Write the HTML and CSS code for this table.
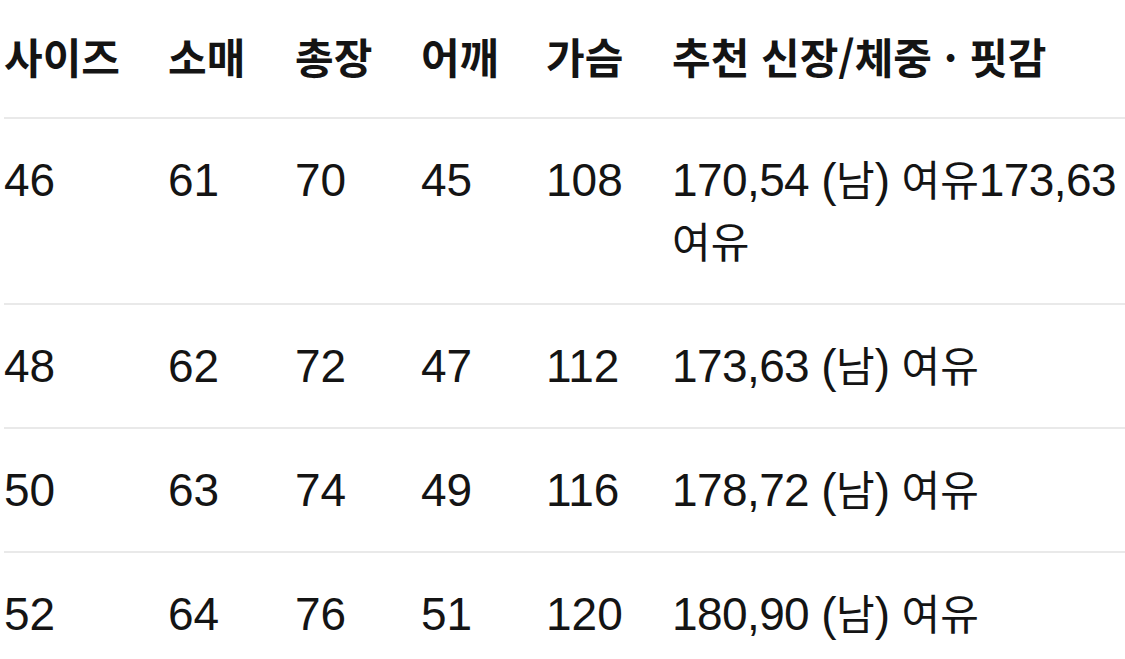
FILE: index.html
```html
<!DOCTYPE html>
<html lang="ko">
<head>
<meta charset="utf-8">
<title>사이즈표</title>
<link rel="stylesheet" href="styles.css">
</head>
<body>
<table class="size-table">
  <colgroup>
    <col class="c-size">
    <col class="c-sleeve">
    <col class="c-length">
    <col class="c-shoulder">
    <col class="c-chest">
    <col class="c-rec">
  </colgroup>
  <thead>
    <tr>
      <th>사이즈</th>
      <th>소매</th>
      <th>총장</th>
      <th>어깨</th>
      <th>가슴</th>
      <th>추천 신장/체중 · 핏감</th>
    </tr>
  </thead>
  <tbody>
    <tr>
      <td>46</td><td>61</td><td>70</td><td>45</td><td>108</td>
      <td class="rec">170,54 (<span class="ko">남</span>) <span class="ko">여유</span>173,63 <span class="ko">여유</span></td>
    </tr>
    <tr>
      <td>48</td><td>62</td><td>72</td><td>47</td><td>112</td>
      <td class="rec">173,63 (<span class="ko">남</span>) <span class="ko">여유</span></td>
    </tr>
    <tr>
      <td>50</td><td>63</td><td>74</td><td>49</td><td>116</td>
      <td class="rec">178,72 (<span class="ko">남</span>) <span class="ko">여유</span></td>
    </tr>
    <tr>
      <td>52</td><td>64</td><td>76</td><td>51</td><td>120</td>
      <td class="rec">180,90 (<span class="ko">남</span>) <span class="ko">여유</span></td>
    </tr>
  </tbody>
</table>
</body>
</html>
```

FILE: styles.css
```css
html, body {
  margin: 0;
  padding: 0;
  background: #ffffff;
}

body {
  overflow: hidden;
  font-family: "Liberation Sans", "Noto Sans CJK KR", sans-serif;
  color: #141414;
}

.size-table {
  margin-left: 4px;
  width: 1121px;
  border-collapse: collapse;
  table-layout: fixed;
  font-size: 46px;
  line-height: 62px;
}

.c-size { width: 164px; }
.c-sleeve { width: 127px; }
.c-length { width: 126px; }
.c-shoulder { width: 125px; }
.c-chest { width: 126px; }
.c-rec { width: 453px; }

.size-table th {
  font-family: "Noto Sans CJK KR", "Liberation Sans", sans-serif;
  font-size: 42px;
  font-weight: 700;
  text-align: left;
  padding: 25px 0 30px 0;
  border-bottom: 2px solid #e9e9e9;
  white-space: nowrap;
}

.size-table td {
  text-align: left;
  vertical-align: top;
  padding: 30px 0 30px 0;
  border-bottom: 2px solid #e9e9e9;
}

.size-table td.rec {
  word-break: keep-all;
  letter-spacing: -0.6px;
}

.ko {
  font-family: "Noto Sans CJK KR", sans-serif;
  font-size: 42px;
  line-height: 40px;
  letter-spacing: 0;
}

.size-table tbody tr:last-child td {
  border-bottom: none;
}
```
